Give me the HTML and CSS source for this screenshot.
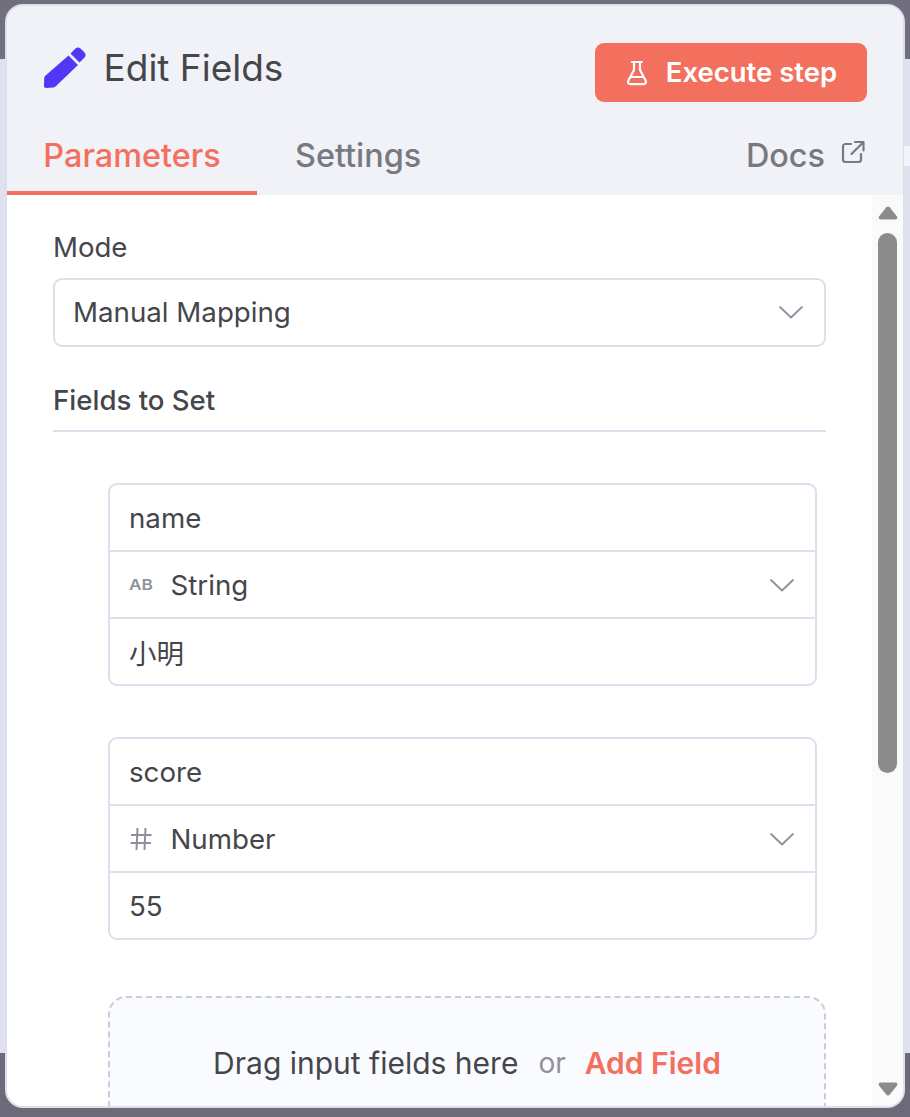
FILE: index.html
```html
<!DOCTYPE html>
<html lang="en">
<head>
<meta charset="utf-8">
<title>Edit Fields</title>
<link rel="stylesheet" href="styles.css">
</head>
<body>
<span class="edge-patch"></span>
<main class="panel">
  <header class="head">
    <div class="title-row">
      <div class="title">
        <svg class="pencil" viewBox="0 0 44 44" width="44" height="44"><path fill="#5038f5" d="M27.5 7.5 32.5 2.5C34 1 36 1 37.5 2.5L41.5 6.5C43 8 43 10 41.5 11.5L36.5 16.5ZM25.5 9.5 35 19 13 40C12 41 11 41.4 10 41.6L3 42C1.8 42 1 41.2 1 40L1.2 32.5C1.3 31.2 1.8 30.4 2.6 29.6Z"/></svg>
        <h1>Edit Fields</h1>
      </div>
      <button class="exec">
        <svg viewBox="0 0 24 28" width="24" height="28" fill="none" stroke="#fff" stroke-width="2.2" stroke-linejoin="round" stroke-linecap="round"><path d="M7 3H17M9 3V11L3.4 21.5C2.4 23.4 3.4 25.2 5.6 25.2H18.4C20.6 25.2 21.6 23.4 20.6 21.5L15 11V3M6 18H18"/></svg>
        <span>Execute step</span>
      </button>
    </div>
    <nav class="tabs">
      <a class="tab active">Parameters</a>
      <a class="tab">Settings</a>
      <a class="docs"><span>Docs</span>
        <svg viewBox="0 0 24 24" width="24" height="24" fill="none" stroke="#777a85" stroke-width="2.2" stroke-linecap="round" stroke-linejoin="round"><path d="M10 4H4.5C3 4 2 5 2 6.5V19.5C2 21 3 22 4.5 22H17.5C19 22 20 21 20 19.5V14M14 2H22.5V10.5M22 2.5 10.5 14"/></svg>
      </a>
    </nav>
  </header>
  <div class="body">
    <div class="content">
      <label class="label">Mode</label>
      <div class="select">
        <span>Manual Mapping</span>
        <svg class="chev" viewBox="0 0 26 14" width="26" height="14" fill="none" stroke="#8e919c" stroke-width="1.8" stroke-linecap="round" stroke-linejoin="round"><path d="M2 2 13 12.5 24 2"/></svg>
      </div>
      <div class="section">Fields to Set</div>
      <div class="fields">
        <div class="field">
          <div class="row">name</div>
          <div class="row type">
            <span class="ico"><span class="ab">AB</span></span><span class="tname">String</span>
            <svg class="chev" viewBox="0 0 26 14" width="26" height="14" fill="none" stroke="#8e919c" stroke-width="1.8" stroke-linecap="round" stroke-linejoin="round"><path d="M2 2 13 12.5 24 2"/></svg>
          </div>
          <div class="row cjk">小明</div>
        </div>
        <div class="field">
          <div class="row">score</div>
          <div class="row type">
            <span class="ico"><svg class="hash" viewBox="0 0 22 24" width="22" height="24" fill="none" stroke="#8e919c" stroke-width="2"><path d="M7.5 1 6.5 23M15.5 1 14.5 23M1 8H21.5M.5 16H21"/></svg></span><span class="tname">Number</span>
            <svg class="chev" viewBox="0 0 26 14" width="26" height="14" fill="none" stroke="#8e919c" stroke-width="1.8" stroke-linecap="round" stroke-linejoin="round"><path d="M2 2 13 12.5 24 2"/></svg>
          </div>
          <div class="row">55</div>
        </div>
        <div class="drop">
          <span class="drag">Drag input fields here</span>
          <span class="or">or</span>
          <span class="add">Add Field</span>
        </div>
      </div>
    </div>
    <aside class="scroll">
      <svg class="arrow" viewBox="0 0 20 14" width="20" height="14"><path fill="#8b8b8b" d="M8.4 1.2C9.2.2 10.8.2 11.6 1.2L19 10.6C19.8 11.8 19.2 13.4 17.6 13.4H2.4C.8 13.4.2 11.8 1 10.6Z"/></svg>
      <div class="thumb"></div>
      <svg class="arrow down" viewBox="0 0 20 14" width="20" height="14"><path fill="#8b8b8b" d="M8.4 12.8C9.2 13.8 10.8 13.8 11.6 12.8L19 3.4C19.8 2.2 19.2.6 17.6.6H2.4C.8.6.2 2.2 1 3.4Z"/></svg>
    </aside>
  </div>
</main>
</body>
</html>
```
FILE: styles.css
```css
* { box-sizing: border-box; }
html, body { margin: 0; height: 100%; }
body {
  width: 910px;
  height: 1117px;
  overflow: hidden;
  padding: 4px 0 0 5px;
  font-family: Inter, "Noto Sans CJK SC", sans-serif;
  color: #45464b;
  background: linear-gradient(#716f7d 0, #716f7d 59px, #dfe2ee 59px, #dfe2ee 1053px, #6c6a78 1053px);
}
.edge-patch {
  position: absolute;
  left: 904px;
  top: 146px;
  width: 6px;
  height: 20px;
  background: #f3f4f9;
}
.panel {
  width: 900px;
  height: 1104px;
  border: 2px solid #dcdfec;
  border-radius: 18px;
  overflow: hidden;
  display: flex;
  flex-direction: column;
  background: #fff;
}
.head { background: #f0f2f8; height: 189px; flex: none; display: flex; flex-direction: column; }
.title-row {
  display: flex;
  justify-content: space-between;
  padding: 37px 36px 0 36px;
  height: 117px;
}
.title { display: flex; align-items: flex-start; gap: 16.5px; }
.pencil { margin-top: 3px; }
h1 { margin: 3px 0 0; font-size: 37px; line-height: 44px; font-weight: 400; color: #45464b; }
.exec {
  width: 272px;
  height: 59px;
  border: 0;
  border-radius: 9px;
  background: #f36f5e;
  color: #fff;
  font: 600 27.5px/1 Inter, sans-serif;
  display: flex;
  align-items: center;
  justify-content: center;
  gap: 17px;
  padding-left: 6px;
}
.exec svg { flex: none; }
.tabs { display: flex; align-items: stretch; flex: 1; position: relative; }
.tab {
  font-size: 32.4px;
  font-weight: 500;
  color: #777981;
  line-height: 44px;
  padding-top: 11px;
  width: 250px;
  text-align: center;
}
.tab + .tab { width: auto; text-align: left; padding-left: 38px; }
.tab.active { color: #f36f5e; border-bottom: 4px solid #f36f5e; }
.docs {
  margin-left: auto;
  padding: 11px 38px 0 0;
  font-size: 32.4px;
  font-weight: 500;
  line-height: 44px;
  color: #777981;
  display: flex;
  align-items: flex-start;
  gap: 16px;
}
.docs svg { margin-top: 6px; }
.body { flex: 1; display: flex; min-height: 0; }
.content { flex: 1; min-width: 0; padding: 34px 46px 0 46px; overflow: hidden; }
.label { display: block; font-size: 27.6px; line-height: 36px; font-weight: 400; }
.select {
  margin-top: 13px;
  height: 69px;
  border: 2px solid #dcdfec;
  border-radius: 9px;
  padding: 0 20px 2px 18px;
  font-size: 27.7px;
  display: flex;
  align-items: center;
  justify-content: space-between;
}
.section {
  margin-top: 35px;
  height: 50px;
  line-height: 36px;
  font-size: 27.6px;
  font-weight: 500;
  border-bottom: 2px solid #dcdfec;
}
.fields { padding: 51px 0 0 55px; }
.field {
  width: 709px;
  border: 2px solid #dcdfec;
  border-radius: 9px;
  margin-bottom: 51px;
}
.row {
  height: 67px;
  padding: 0 19px;
  font-size: 27.7px;
  display: flex;
  align-items: center;
  border-top: 2px solid #dcdfec;
}
.row:first-child { height: 65px; border-top: 0; }
.row.cjk { font-family: "Noto Sans CJK SC", sans-serif; font-size: 27.5px; }
.type { padding-right: 20px; }
.ico { width: 41.5px; color: #8e919c; flex: none; display: flex; align-items: center; }
.ab { display: inline-block; font-size: 15px; font-weight: 600; transform: scaleX(1.15); transform-origin: left center; }
.hash { display: block; margin-left: 1px; }
.tname { flex: 1; }
.drop {
  width: 718px;
  height: 140px;
  margin-top: 56px;
  border: 2px dashed #c9ccda;
  border-bottom: 0;
  border-radius: 18px 18px 0 0;
  background: #fafbfe;
  display: flex;
  justify-content: center;
  align-items: flex-start;
  padding-top: 45px;
  font-size: 30px;
  line-height: 40px;
  gap: 20px;
}
.or { color: #8e919c; font-size: 28px; }
.add { color: #f36f5e; font-weight: 600; margin-left: -1px; }
.scroll {
  width: 31px;
  flex: none;
  background: #fafafa;
  display: flex;
  flex-direction: column;
  align-items: center;
  padding-top: 11px;
}
.thumb { width: 19px; height: 540px; margin-top: 13px; border-radius: 10px; background: #8b8b8b; }
.arrow { flex: none; }
.arrow.down { margin-top: auto; margin-bottom: 10px; }
```
